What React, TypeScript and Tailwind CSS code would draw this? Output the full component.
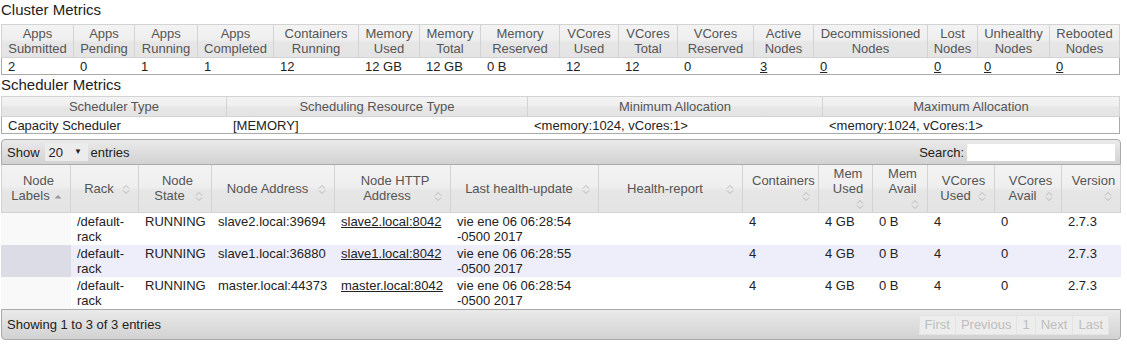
import React from "react";

const hdrBg = "bg-[linear-gradient(to_bottom,#f3f3f3_0%,#efefef_45%,#e6e6e6_55%,#e4e4e4_100%)]";

const clusterCols = [
  ["Apps", "Submitted", "2", false, 73],
  ["Apps", "Pending", "0", false, 61],
  ["Apps", "Running", "1", false, 63],
  ["Apps", "Completed", "1", false, 76],
  ["Containers", "Running", "12", false, 85],
  ["Memory", "Used", "12 GB", false, 61],
  ["Memory", "Total", "12 GB", false, 61],
  ["Memory", "Reserved", "0 B", false, 79],
  ["VCores", "Used", "12", false, 59],
  ["VCores", "Total", "12", false, 59],
  ["VCores", "Reserved", "0", false, 76],
  ["Active", "Nodes", "3", true, 60],
  ["Decommissioned", "Nodes", "0", true, 114],
  ["Lost", "Nodes", "0", true, 50],
  ["Unhealthy", "Nodes", "0", true, 72],
  ["Rebooted", "Nodes", "0", true, 70],
] as const;

const schedCols = [
  ["Scheduler Type", "Capacity Scheduler", 226],
  ["Scheduling Resource Type", "[MEMORY]", 301],
  ["Minimum Allocation", "<memory:1024, vCores:1>", 295],
  ["Maximum Allocation", "<memory:1024, vCores:1>", 297],
] as const;

const nodeHeaders: [string, number, "asc" | "both"][] = [
  ["Node Labels", 70, "asc"],
  ["Rack", 68, "both"],
  ["Node State", 73, "both"],
  ["Node Address", 123, "both"],
  ["Node HTTP Address", 116, "both"],
  ["Last health-update", 148, "both"],
  ["Health-report", 144, "both"],
  ["Containers", 76, "both"],
  ["Mem Used", 54, "both"],
  ["Mem Avail", 55, "both"],
  ["VCores Used", 67, "both"],
  ["VCores Avail", 67, "both"],
  ["Version", 59, "both"],
];

const nodeRows = [
  ["slave2.local:39694", "slave2.local:8042", "vie ene 06 06:28:54 -0500 2017"],
  ["slave1.local:36880", "slave1.local:8042", "vie ene 06 06:28:55 -0500 2017"],
  ["master.local:44373", "master.local:8042", "vie ene 06 06:28:54 -0500 2017"],
];

const nodeGrid =
  "grid-cols-[70px_68px_73px_123px_116px_148px_144px_76px_54px_55px_67px_67px_59px]";

function SortIcon({ kind }: { kind: "asc" | "both" }) {
  return (
    <span className="float-right block h-4 w-4">
      <svg width="16" height="16" viewBox="0 0 16 16">
        {kind === "both" ? (
          <path d="M5 7.5l3-3 3 3M5 9.5l3 3 3-3" fill="none" stroke="#b8b8b8" strokeWidth="1" />
        ) : (
          <path d="M4.5 10.5L8 7l3.5 3.5z" fill="#9a9a9a" />
        )}
      </svg>
    </span>
  );
}

export default function App() {
  return (
    <div className="w-[1127px] h-[351px] bg-white pl-[1px] font-['Liberation_Sans',Arial,sans-serif] text-[13px] leading-[15px] text-[#222]">
      <h3 className="mt-[1px] mb-[6px] text-[15px] leading-[17px] font-normal text-[#222]">Cluster Metrics</h3>
      <div className="grid w-[1119px] grid-cols-[73px_61px_63px_76px_85px_61px_61px_79px_59px_59px_76px_60px_114px_50px_72px_70px]">
        {clusterCols.map(([a, b], i) => (
          <div
            key={"h" + i}
            className={`${hdrBg} h-[34px] border-t border-b border-r border-[#d3d3d3] ${i === 0 ? "border-l" : ""} flex flex-col items-center justify-center text-[#555]`}
          >
            <span>{a}</span>
            <span>{b}</span>
          </div>
        ))}
        {clusterCols.map(([, , v, link], i) => (
          <div
            key={"d" + i}
            className={`h-[17px] pt-[1px] pl-[6px] border-b border-[#aaa] ${i === 0 ? "border-l" : ""} ${i === clusterCols.length - 1 ? "border-r" : ""}`}
          >
            {link ? <a className="underline text-[#222]">{v}</a> : v}
          </div>
        ))}
      </div>

      <h3 className="mt-[1px] mb-[3px] text-[15px] leading-[17px] font-normal text-[#222]">Scheduler Metrics</h3>
      <div className="grid w-[1119px] grid-cols-[226px_301px_295px_297px]">
        {schedCols.map(([h], i) => (
          <div
            key={"sh" + i}
            className={`${hdrBg} h-[21px] border-t border-b border-r border-[#d3d3d3] ${i === 0 ? "border-l" : ""} flex items-center justify-center text-[#555]`}
          >
            {h}
          </div>
        ))}
        {schedCols.map(([, v], i) => (
          <div
            key={"sd" + i}
            className={`h-[17px] pt-[1px] pl-[6px] border-b border-[#aaa] ${i === 0 ? "border-l" : ""} ${i === schedCols.length - 1 ? "border-r" : ""}`}
          >
            {v}
          </div>
        ))}
      </div>

      <div className="mt-[5px] w-[1120px]">
        <div className="flex h-[26px] items-center justify-between rounded-t-[4px] border border-[#aaa] bg-[linear-gradient(to_bottom,#eaeaea,#d2d2d2)] pl-[5px] pr-[5px] text-[#222]">
          <div className="flex items-center">
            <span>Show</span>
            <span className="ml-[5px] flex h-[18px] w-[43px] items-center bg-[#ececec] pl-[4px]">
              <span>20</span>
              <span className="ml-[11px] text-[8px] leading-[8px]">▼</span>
            </span>
            <span className="ml-[3px]">entries</span>
          </div>
          <div className="flex items-center">
            <span>Search:</span>
            <span className="ml-[3px] block h-[17px] w-[148px] bg-white" />
          </div>
        </div>

        <div className={`grid ${nodeGrid}`}>
          {nodeHeaders.map(([label, , kind], i) => (
            <div
              key={"nh" + i}
              className={`${hdrBg} flex h-[48px] items-center border-b border-r border-[#d3d3d3] ${i === 0 ? "border-l" : ""} pl-[9px] pr-[4px] text-[#555]`}
            >
              <div className="flow-root w-full text-center">
                {label}
                <SortIcon kind={kind} />
              </div>
            </div>
          ))}
          {nodeRows.map((r, ri) =>
            [
              "",
              "/default-rack",
              "RUNNING",
              r[0],
              r[1],
              r[2],
              "",
              "4",
              "4 GB",
              "0 B",
              "4",
              "0",
              "2.7.3",
            ].map((v, ci) => {
              const even = ri === 1;
              const bg =
                ci === 0 ? (even ? "bg-[#dcdce6]" : "bg-[#f9f9f9]") : even ? "bg-[#eeeefb]" : "bg-white";
              return (
                <div key={ri + "-" + ci} className={`${bg} h-[32px] px-[6px] py-[1px]`}>
                  {ci === 4 ? (
                    <a className="underline text-[#222]">{v}</a>
                  ) : ci === 1 ? (
                    <>
                      /default-
                      <br />
                      rack
                    </>
                  ) : ci === 5 ? (
                    <>
                      {v.slice(0, 19)}
                      <br />
                      {v.slice(20)}
                    </>
                  ) : (
                    v
                  )}
                </div>
              );
            })
          )}
        </div>

        <div className="flex h-[31px] items-center justify-between rounded-b-[4px] border border-[#aaa] bg-[linear-gradient(to_bottom,#eaeaea,#d2d2d2)] pl-[5px] pr-[11px] text-[#222]">
          <span>Showing 1 to 3 of 3 entries</span>
          <div className="flex">
            {["First", "Previous", "1", "Next", "Last"].map((b) => (
              <span
                key={b}
                className="-ml-px h-[20px] border border-[#e3e3e3] bg-[#ededed] px-[5px] leading-[18px] text-[#bdbdbd]"
              >
                {b}
              </span>
            ))}
          </div>
        </div>
      </div>
    </div>
  );
}
